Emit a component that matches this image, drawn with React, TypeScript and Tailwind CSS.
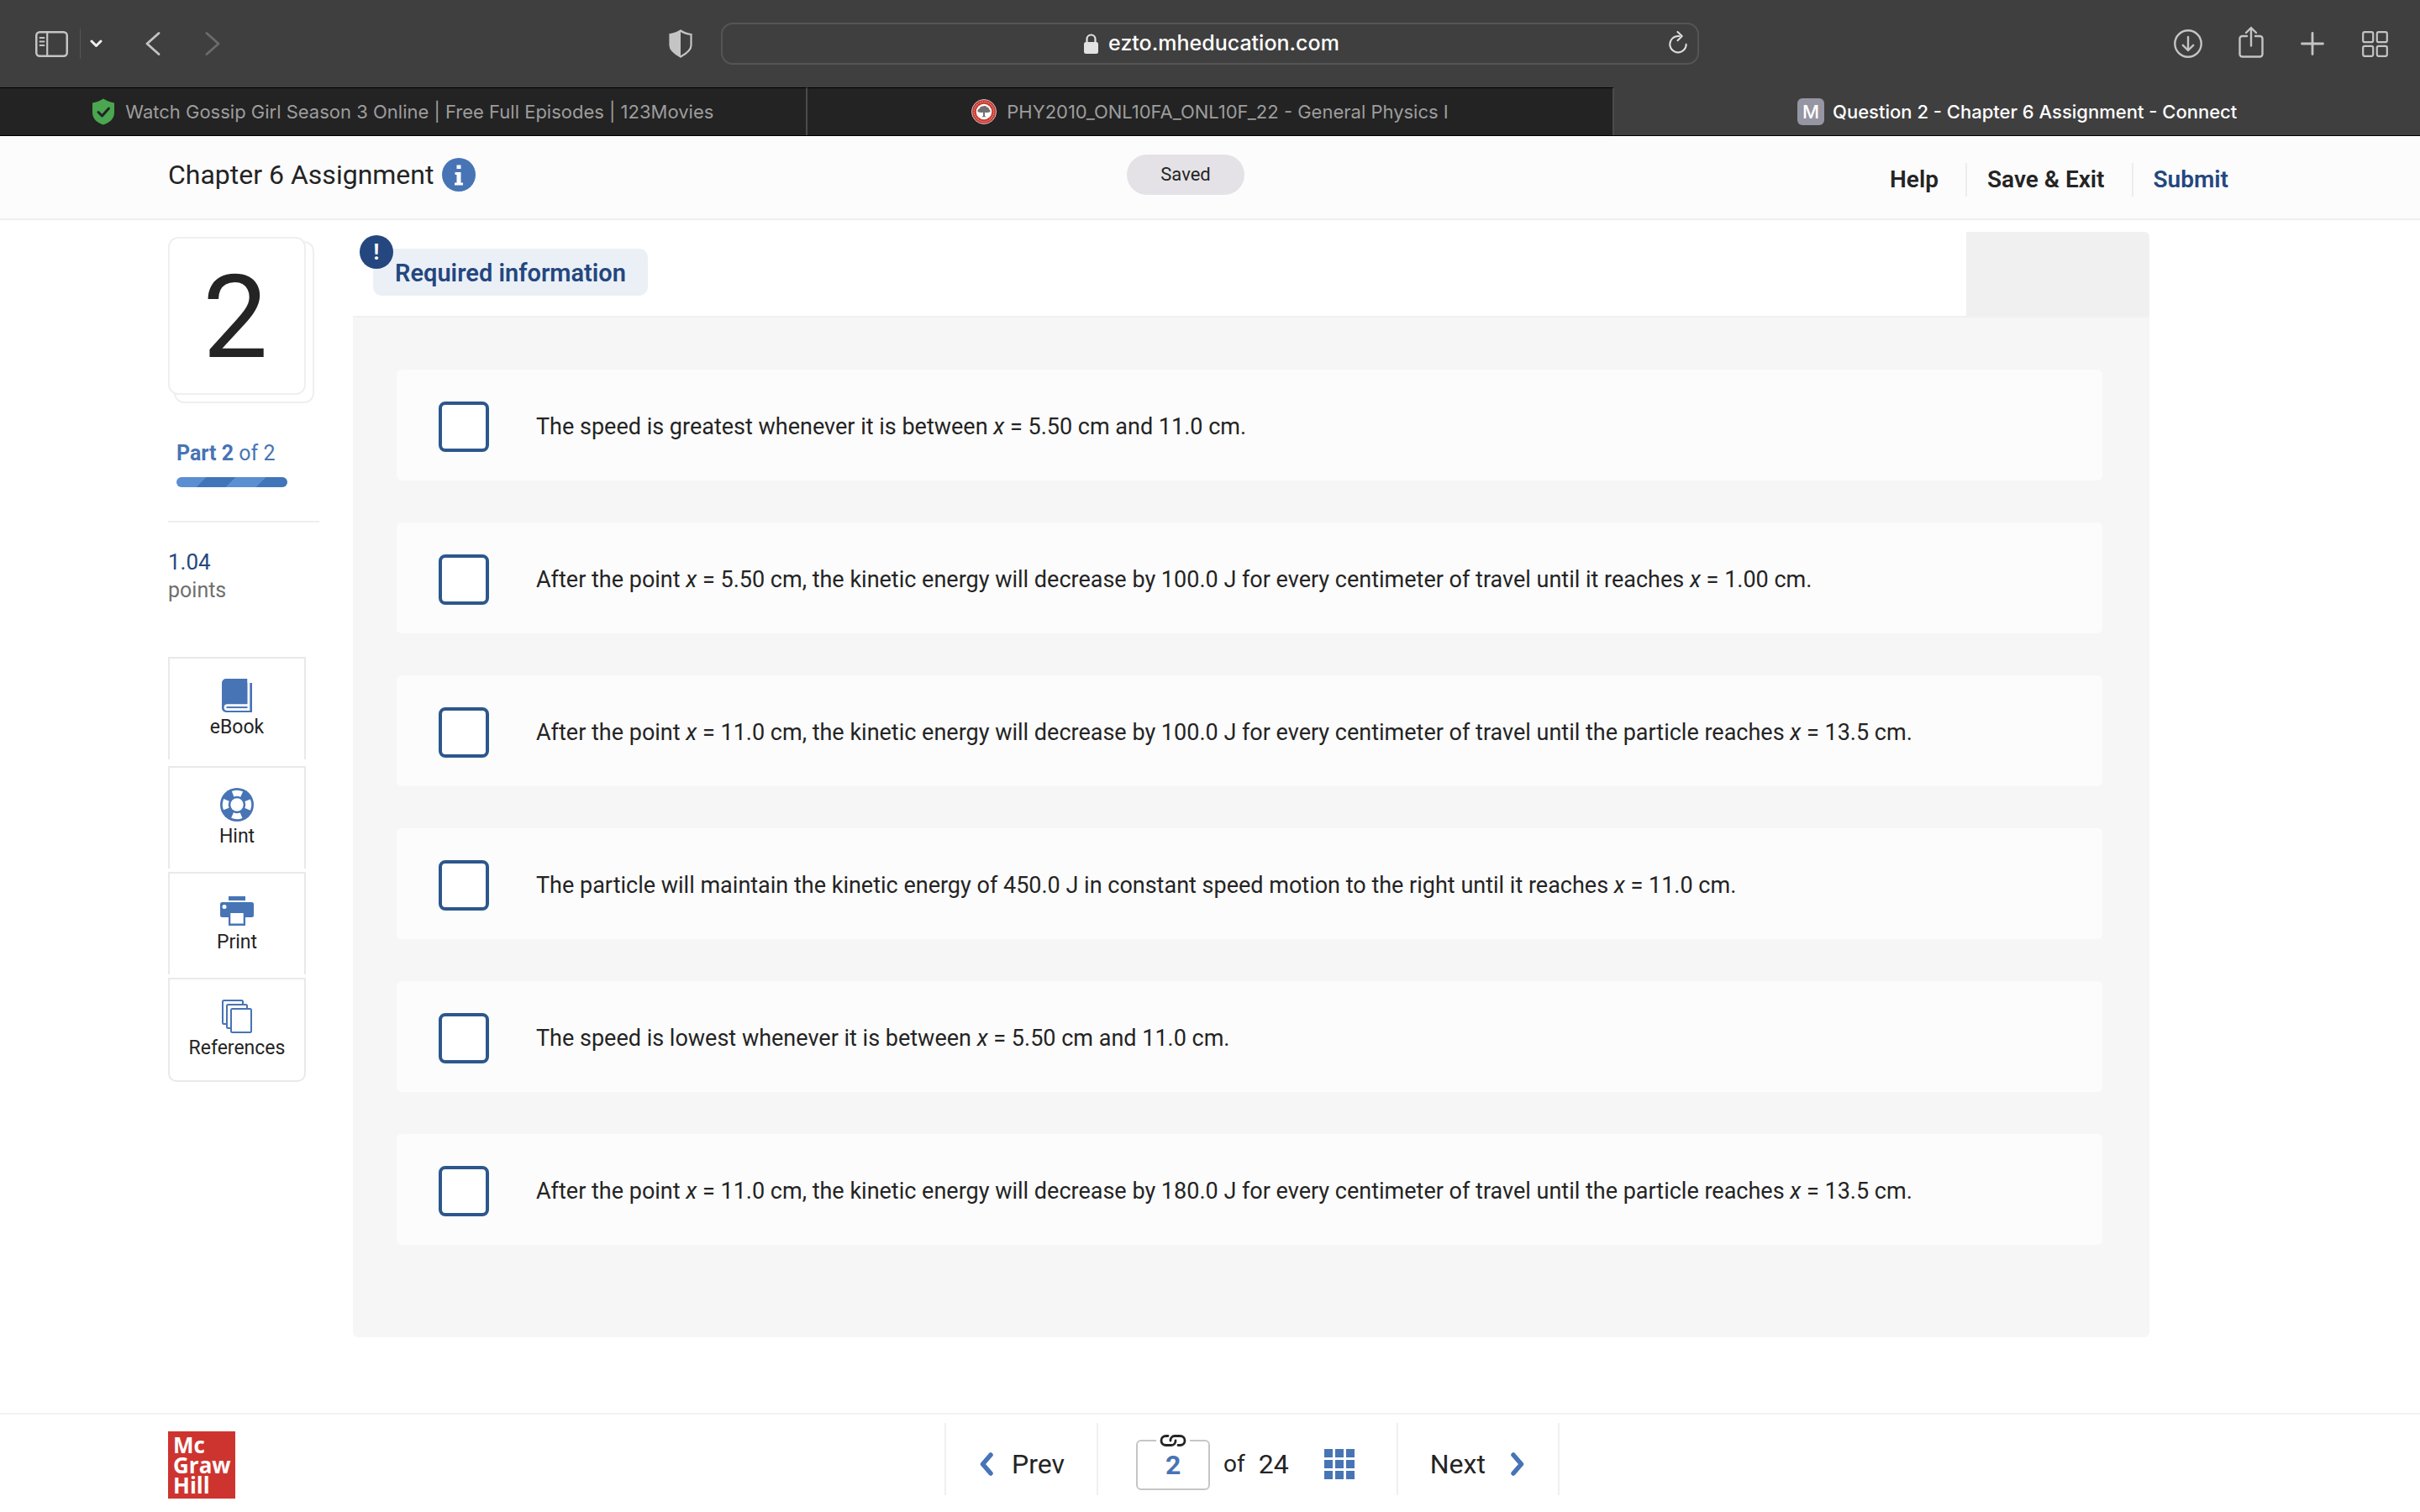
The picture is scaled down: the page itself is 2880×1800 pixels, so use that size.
import { ReactNode, useState } from "react";

const Var = () => <i>x</i>;

const answers: { id: string; text: ReactNode }[] = [
  {
    id: "a1",
    text: (
      <>
        The speed is greatest whenever it is between <Var /> = 5.50 cm and 11.0 cm.
      </>
    ),
  },
  {
    id: "a2",
    text: (
      <>
        After the point <Var /> = 5.50 cm, the kinetic energy will decrease by 100.0 J for every
        centimeter of travel until it reaches <Var /> = 1.00 cm.
      </>
    ),
  },
  {
    id: "a3",
    text: (
      <>
        After the point <Var /> = 11.0 cm, the kinetic energy will decrease by 100.0 J for every
        centimeter of travel until the particle reaches <Var /> = 13.5 cm.
      </>
    ),
  },
  {
    id: "a4",
    text: (
      <>
        The particle will maintain the kinetic energy of 450.0 J in constant speed motion to the
        right until it reaches <Var /> = 11.0 cm.
      </>
    ),
  },
  {
    id: "a5",
    text: (
      <>
        The speed is lowest whenever it is between <Var /> = 5.50 cm and 11.0 cm.
      </>
    ),
  },
  {
    id: "a6",
    text: (
      <>
        After the point <Var /> = 11.0 cm, the kinetic energy will decrease by 180.0 J for every
        centimeter of travel until the particle reaches <Var /> = 13.5 cm.
      </>
    ),
  },
];

const BookIcon = () => (
  <svg width="36" height="40" viewBox="0 0 36 40">
    <path d="M5 0h25.500v5H36v35H5a5 5 0 0 1-5-5V5a5 5 0 0 1 5-5z" fill="#4774b5" />
    <path d="M30.500 0h2.800v38H6.500a3.900 3.900 0 0 1 0-7.800h24z" fill="#fff" />
    <path d="M5.500 34.100h25" stroke="#4774b5" strokeWidth="2" />
  </svg>
);

const HintIcon = () => (
  <svg width="40" height="40" viewBox="0 0 40 40">
    <circle cx="20" cy="20" r="20" fill="#4774b5" />
    <circle
      cx="20"
      cy="20"
      r="13.700"
      fill="none"
      stroke="#fff"
      strokeWidth="7"
      strokeDasharray="10.760 10.760"
      transform="rotate(-22.500 20 20)"
    />
    <circle cx="20" cy="20" r="7.700" fill="#fff" />
  </svg>
);

const PrintIcon = () => (
  <svg width="40" height="40" viewBox="0 0 40 40">
    <path d="M10 3h20v5H10z" fill="#4774b5" />
    <rect y="10" width="40" height="18" rx="2.500" fill="#4774b5" />
    <path d="M10 22h20v16H10z" fill="#4774b5" />
    <path d="M12.300 23h15.400v12.500H12.300z" fill="#fff" />
    <circle cx="5" cy="15.500" r="2.500" fill="#fff" />
  </svg>
);

const ReferencesIcon = () => (
  <svg width="36" height="40" viewBox="0 0 36 40" fill="#fff" stroke="#4774b5" strokeWidth="2">
    <rect x="1" y="1" width="24" height="28" rx="1.500" />
    <rect x="6" y="6" width="24" height="28" rx="1.500" />
    <rect x="11" y="11" width="24" height="28" rx="1.500" />
  </svg>
);

const tools = [
  { name: "eBook", icon: <BookIcon /> },
  { name: "Hint", icon: <HintIcon /> },
  { name: "Print", icon: <PrintIcon /> },
  { name: "References", icon: <ReferencesIcon /> },
];

const Toolbar = () => (
  <div className="grid grid-cols-[minmax(0,1fr)_40.4%_minmax(0,1fr)] items-center h-[104px] bg-[#3f3f3f] text-[#c4c4c4]">
    <div className="flex items-center pl-[42px] pr-[34px]">
      <button aria-label="Sidebar">
        <svg width="39" height="31" viewBox="0 0 39 31" fill="none" stroke="currentColor">
          <rect x="1.250" y="1.250" width="36.500" height="28.500" rx="4" strokeWidth="2.500" />
          <path d="M14.200 1v29" strokeWidth="2.200" />
          <path d="M5.500 8h5M5.500 12.500h5M5.500 17h5" strokeWidth="1.800" strokeLinecap="round" />
        </svg>
      </button>
      <span className="w-px h-9 ml-[14px] mr-[11px] bg-[#565656]" />
      <button aria-label="Tab groups" className="text-[#f0f0f0]">
        <svg width="15" height="10" viewBox="0 0 15 10" fill="none">
          <path
            d="M2 2l5.500 5.500L13 2"
            stroke="currentColor"
            strokeWidth="3"
            strokeLinecap="round"
            strokeLinejoin="round"
          />
        </svg>
      </button>
      <button aria-label="Back" className="ml-[51px]">
        <svg width="18" height="28" viewBox="0 0 18 28" fill="none">
          <path
            d="M16 1.500L2 14l14 12.500"
            stroke="currentColor"
            strokeWidth="2.800"
            strokeLinecap="round"
            strokeLinejoin="round"
          />
        </svg>
      </button>
      <button aria-label="Forward" className="ml-[53px] text-[#6b6b6b]">
        <svg width="18" height="28" viewBox="0 0 18 28" fill="none">
          <path
            d="M2 1.500L16 14L2 26.500"
            stroke="currentColor"
            strokeWidth="2.800"
            strokeLinecap="round"
            strokeLinejoin="round"
          />
        </svg>
      </button>
      <button aria-label="Privacy report" className="ml-auto">
        <svg width="28" height="34" viewBox="0 0 28 34">
          <path
            d="M14 1.500C10 4.500 6 5.500 1.500 6v13c0 6 6 10 12.500 13.500C20.500 29 26.500 25 26.500 19V6C22 5.500 18 4.500 14 1.500z"
            fill="none"
            stroke="currentColor"
            strokeWidth="2.200"
          />
          <path d="M14 1.500C10 4.500 6 5.500 1.500 6v13c0 6 6 10 12.500 13.500z" fill="currentColor" />
        </svg>
      </button>
    </div>

    <div className="flex items-center h-[50px] pr-3 border-2 border-[#555] rounded-[14px]">
      <label className="flex flex-1 items-center justify-center gap-3 pl-[38px] text-white">
        <svg width="17" height="24" viewBox="0 0 17 24">
          <rect y="10" width="17" height="14" rx="2.500" fill="#e2e2e2" />
          <path d="M3.500 11V6.500a5 5 0 0 1 10 0V11" fill="none" stroke="#e2e2e2" strokeWidth="2.200" />
        </svg>
        <input
          type="text"
          aria-label="Address"
          defaultValue="ezto.mheducation.com"
          className="[field-sizing:content] pb-[2px] bg-transparent text-[25px] leading-8 font-medium outline-none"
        />
      </label>
      <button aria-label="Reload" className="pb-1 text-[#e0e0e0]">
        <svg width="22" height="27" viewBox="0 0 22 27" fill="none" stroke="currentColor" strokeWidth="2">
          <path d="M12.500 6H11a9.700 9.700 0 1 0 9.700 9.700" strokeLinecap="round" />
          <path d="M10.500 1l5.200 5-5.200 5.200" strokeLinecap="round" strokeLinejoin="round" />
        </svg>
      </button>
    </div>

    <div className="flex items-center justify-end pr-[38px]">
      <button aria-label="Downloads">
        <svg width="34" height="34" viewBox="0 0 34 34" fill="none" stroke="currentColor" strokeWidth="2.400">
          <circle cx="17" cy="17" r="15.700" />
          <path d="M17 9v16M10.800 18.800L17 25l6.200-6.200" strokeLinecap="round" strokeLinejoin="round" />
        </svg>
      </button>
      <button aria-label="Share" className="ml-[43px] mb-1">
        <svg
          width="30"
          height="38"
          viewBox="0 0 30 38"
          fill="none"
          stroke="currentColor"
          strokeWidth="2.400"
          strokeLinecap="round"
          strokeLinejoin="round"
        >
          <path d="M10 12H4.500a3 3 0 0 0-3 3v18.500a3 3 0 0 0 3 3h21a3 3 0 0 0 3-3V15a3 3 0 0 0-3-3H20" />
          <path d="M15 23.500V2M9 8l6-6 6 6" />
        </svg>
      </button>
      <button aria-label="New tab" className="ml-[44px]">
        <svg width="28" height="28" viewBox="0 0 28 28" stroke="currentColor" strokeWidth="2.800">
          <path d="M14 1.500v25M1.500 14h25" strokeLinecap="round" />
        </svg>
      </button>
      <button aria-label="Tab overview" className="ml-[45px]">
        <svg width="31" height="31" viewBox="0 0 31 31" fill="none" stroke="currentColor" strokeWidth="2.200">
          <rect x="1.200" y="1.200" width="12" height="12" rx="2" />
          <rect x="17.800" y="1.200" width="12" height="12" rx="2" />
          <rect x="1.200" y="17.800" width="12" height="12" rx="2" />
          <rect x="17.800" y="17.800" width="12" height="12" rx="2" />
        </svg>
      </button>
    </div>
  </div>
);

const inactiveTab =
  "flex flex-1 items-center justify-center gap-3 bg-[#232323] text-[#9d9d9d] border-t border-t-black border-r-2 border-r-[#4b4b4b]";

const TabBar = () => (
  <div className="flex h-[58px] bg-[#3f3f3f] border-b border-black text-[22px] leading-7">
    <button className={inactiveTab}>
      <svg width="28" height="32" viewBox="0 0 28 32">
        <path
          d="M14 .5C10 3.200 5.500 4.800 1 5.500V17c0 7.500 5.500 12 13 14.500C21.500 29 27 24.500 27 17V5.500C22.500 4.800 18 3.200 14 .5z"
          fill="#4aa651"
        />
        <path
          d="M8 16.500l4.500 4.500 8-9"
          fill="none"
          stroke="#232323"
          strokeWidth="3"
          strokeLinecap="round"
          strokeLinejoin="round"
        />
      </svg>
      Watch Gossip Girl Season 3 Online | Free Full Episodes | 123Movies
    </button>
    <button className={inactiveTab}>
      <svg width="30" height="30" viewBox="0 0 30 30">
        <circle cx="15" cy="15" r="14.500" fill="#c9352c" stroke="#c9c9c9" />
        <circle cx="15" cy="15" r="11.700" fill="none" stroke="#e0867f" strokeWidth="1.500" strokeDasharray="1.500 1" />
        <circle cx="15" cy="15" r="9.300" fill="#fff" />
        <path
          d="M7.500 15c-.5-2 1-3.500 2.200-3.700C10 9.500 12 8.300 13.500 8.600c1.500-1 4.500-.5 5 1 1.800 0 2.800 1.500 2.500 2.600 1.500.6 2 2 1.300 3-2 .9-4.500.8-6.300.5V20l2 1.300h-6l2-1.300v-4.300c-2 .4-4.700.3-6.500-.7z"
          fill="#707070"
        />
      </svg>
      PHY2010_ONL10FA_ONL10F_22 - General Physics I
    </button>
    <button className="flex flex-1 items-center justify-center gap-[10px] text-white font-medium">
      <span className="grid place-items-center size-8 rounded-md bg-[#9695a3]">M</span>
      Question 2 - Chapter 6 Assignment - Connect
    </button>
  </div>
);

const Header = () => (
  <header className="grid grid-cols-[1fr_auto_1fr] items-start h-[100px] pt-[22px] pl-[200px] pr-[228px] bg-[#fcfcfc] border-b-2 border-[#efefef]">
    <div className="flex items-center gap-[10px] h-12">
      <h1 className="text-[32px] leading-10">Chapter 6 Assignment</h1>
      <button aria-label="Assignment info">
        <svg width="40" height="40" viewBox="0 0 40 40">
          <circle cx="20" cy="20" r="20" fill="#4774b5" />
          <path
            d="M17.500 8.500h5v4.500h-5zM15.500 17h7v12.500h2.500v3H15v-3h2.500v-9.500h-2z"
            fill="#fff"
          />
        </svg>
      </button>
    </div>
    <div className="flex items-center justify-center w-[140px] h-12 mr-[30px] rounded-full bg-[#e4e2e6] text-[22px] leading-7">
      Saved
    </div>
    <nav className="flex justify-end mt-[10px] text-[28px] leading-10 font-semibold">
      <button className="pr-8 border-r-2 border-[#ededed]">Help</button>
      <button className="pl-6 pr-8 border-r-2 border-[#ededed]">Save &amp; Exit</button>
      <button className="pl-6 text-[#24477f]">Submit</button>
    </nav>
  </header>
);

const Sidebar = () => (
  <aside className="w-[180px] shrink-0 pt-[6px]">
    <div className="relative w-[164px] h-[188px] mb-[55px]">
      <div className="absolute left-[7px] top-[5px] w-[167px] h-[193px] border-2 border-[#efefef] rounded-xl" />
      <div className="relative flex items-center justify-center h-full pt-1 pr-1 border-2 border-[#efefef] rounded-xl bg-white text-[138px] leading-none">
        2
      </div>
    </div>
    <div className="pl-[10px]">
      <p className="text-[25px] leading-[30px] text-[#4774b5]">
        <b>Part 2</b> of 2
      </p>
      <div className="w-[132px] h-3 mt-[13px] rounded-full bg-[repeating-linear-gradient(135deg,#5a8fd2_0px,#5a8fd2_25px,#4175b9_25px,#4175b9_50px)]" />
    </div>
    <hr className="mt-10 border-t-2 border-[#efefef]" />
    <p className="mt-[30px] text-[26px] leading-[34px] text-[#24477f]">1.04</p>
    <p className="text-[25px] leading-[34px] text-[#6f6f6f]">points</p>
    <div className="flex flex-col gap-1 w-[164px] mt-[62px]">
      {tools.map((tool) => (
        <button
          key={tool.name}
          className="flex flex-col items-center gap-1 pt-6 pb-6 border-2 border-b-0 border-[#e9e9e9] text-[23px] leading-7 first:mb-1 last:border-b-2 last:rounded-b-[10px]"
        >
          {tool.icon}
          {tool.name}
        </button>
      ))}
    </div>
  </aside>
);

const Question = () => {
  const [checked, setChecked] = useState<string[]>([]);

  const toggle = (id: string) =>
    setChecked((prev) => (prev.includes(id) ? prev.filter((c) => c !== id) : [...prev, id]));

  return (
    <section className="flex-1">
      <div className="flex justify-between h-[100px]">
        <div className="relative h-14 mt-5 ml-6 px-[26px] rounded-[10px] bg-[#ebf0f7] text-[#24477f]">
          <h2 className="text-[29px] leading-[58px] font-semibold">Required information</h2>
          <span className="absolute -left-4 -top-4 grid place-items-center size-10 rounded-full bg-[#24477f] text-white text-[25px] leading-none font-bold">
            !
          </span>
        </div>
        <div className="w-[218px] rounded-tr-md bg-[#f0f0f0]" />
      </div>
      <div className="flex flex-col gap-[50px] pt-[62px] pb-[110px] pl-[52px] pr-[56px] border-t-2 border-[#f1f1f1] rounded-b-md bg-[#f6f6f6]">
        {answers.map((answer) => (
          <label
            key={answer.id}
            className="flex items-center gap-[56px] pt-[38px] pb-[34px] px-[50px] rounded-md bg-[#fcfcfc] text-[27px] leading-9"
          >
            <input
              type="checkbox"
              checked={checked.includes(answer.id)}
              onChange={() => toggle(answer.id)}
              className="appearance-none shrink-0 size-[60px] border-4 border-[#2d578c] rounded-lg bg-white checked:bg-[#2d578c]"
            />
            <span>{answer.text}</span>
          </label>
        ))}
      </div>
    </section>
  );
};

const Footer = () => (
  <footer className="flex items-start h-[118px] pl-[200px] pr-[180px] border-t-2 border-[#f2f2f2] bg-white">
    <div className="size-20 mt-5 pl-[6px] pt-1 bg-[#ce342f] text-white font-['Open_Sans',sans-serif] text-[26px] leading-6 font-bold">
      Mc
      <br />
      Graw
      <br />
      Hill
    </div>
    <nav className="flex flex-1 justify-center h-[86px] mt-[10px] text-[32px] leading-10">
      <button className="flex items-center gap-[22px] pt-3 pl-[38px] pr-[38px] border-l-2 border-[#f0f0f0]">
        <svg width="18" height="28" viewBox="0 0 18 28" fill="none">
          <path d="M15 3L5.500 14L15 25" stroke="#4774b5" strokeWidth="5.500" strokeLinecap="round" strokeLinejoin="round" />
        </svg>
        Prev
      </button>
      <div className="flex items-center pt-3 pl-[45px] pr-[50px] border-x-2 border-[#f0f0f0]">
        <label className="relative mt-[2px]">
          <input
            type="text"
            aria-label="Question number"
            defaultValue="2"
            className="block w-[88px] h-[60px] border-2 border-[#c6c6c6] rounded-md text-center font-bold text-[#4774b5]"
          />
          <span className="absolute left-6 -top-[6px] px-1 bg-white">
            <svg
              width="32"
              height="14"
              viewBox="0 0 32 14"
              fill="none"
              stroke="#242424"
              strokeWidth="2.800"
              strokeLinecap="round"
            >
              <path d="M10 1.500H7.500a5.500 5.500 0 0 0 0 11H14a5 5 0 0 0 5-5.500" />
              <path d="M22 12.500h2.500a5.500 5.500 0 0 0 0-11H18a5 5 0 0 0-5 5.500" />
            </svg>
          </span>
        </label>
        <span className="ml-4 text-[28px]">of</span>
        <span className="ml-4">24</span>
        <button aria-label="Question list" className="ml-[42px]">
          <svg width="36" height="36" viewBox="0 0 36 36" fill="#4774b5">
            {[0, 13, 26].map((y) => [0, 13, 26].map((x) => <rect key={`${x}${y}`} x={x} y={y} width="10" height="10" />))}
          </svg>
        </button>
      </div>
      <button className="flex items-center gap-[30px] pt-3 pl-[38px] pr-[38px] border-r-2 border-[#f0f0f0]">
        Next
        <svg width="18" height="28" viewBox="0 0 18 28" fill="none">
          <path d="M3 3l9.500 11L3 25" stroke="#4774b5" strokeWidth="5.500" strokeLinecap="round" strokeLinejoin="round" />
        </svg>
      </button>
    </nav>
  </footer>
);

export default function App() {
  return (
    <div className="flex flex-col min-h-screen bg-white font-['Inter',sans-serif]">
      <Toolbar />
      <TabBar />
      <div className="flex flex-1 flex-col font-['Roboto',sans-serif] text-[#242424]">
        <Header />
        <main className="flex flex-1 items-start gap-10 pt-[14px] pl-[200px] pr-[322px] pb-[90px]">
          <Sidebar />
          <Question />
        </main>
        <Footer />
      </div>
    </div>
  );
}
